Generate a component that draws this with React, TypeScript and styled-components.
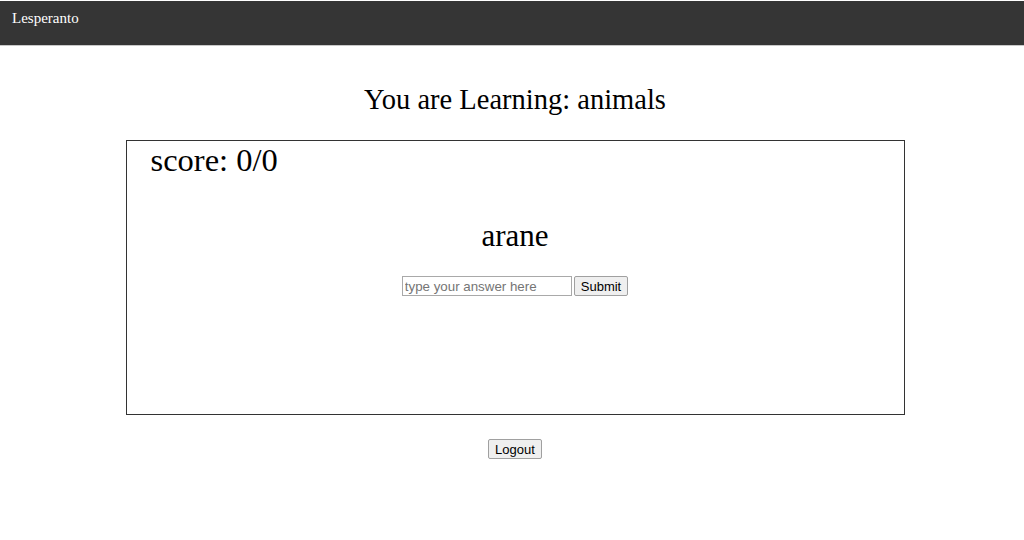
import React, { useState } from 'react';
import styled, { createGlobalStyle } from 'styled-components';

const GlobalStyle = createGlobalStyle`
  html, body {
    margin: 0;
    padding: 0;
    background: #ffffff;
    font-family: "Liberation Serif", "Times New Roman", serif;
  }
`;

const NavBar = styled.nav`
  height: 45px;
  margin-top: 1px;
  background: #353535;
  border-bottom: 1px solid #c8c8c8;
  padding: 9px 12px 0;
  box-sizing: border-box;
  color: #ffffff;
  font-size: 15px;
`;

const Main = styled.main`
  display: flex;
  flex-direction: column;
  align-items: center;
  padding-left: 6px;
`;

const Heading = styled.h2`
  margin: 37px 0 23px;
  font-size: 28.5px;
  line-height: 34px;
  font-weight: normal;
  color: #000;
`;

const Card = styled.div`
  width: 779px;
  height: 275px;
  box-sizing: border-box;
  border: 1px solid #333;
  padding: 0 24px;
  display: flex;
  flex-direction: column;
`;

const Score = styled.div`
  font-size: 32.5px;
  line-height: 38px;
`;

const Word = styled.div`
  margin-top: 38px;
  text-align: center;
  font-size: 31px;
  line-height: 38px;
`;

const AnswerRow = styled.form`
  margin-top: 21px;
  display: flex;
  justify-content: center;
  gap: 2px;
`;

const AnswerInput = styled.input`
  width: 170px;
  height: 20px;
  box-sizing: border-box;
  border: 1px solid #a9a9a9;
  padding: 1px 2px;
  font-family: "Liberation Sans", Arial, sans-serif;
  font-size: 13.33px;
  &::placeholder {
    color: #757575;
  }
`;

const Button = styled.button`
  height: 20px;
  box-sizing: border-box;
  padding: 0 6px;
  border: 1px solid #a0a0a0;
  border-radius: 2px;
  background: #efefef;
  color: #000;
  font-family: "Liberation Sans", Arial, sans-serif;
  font-size: 13px;
`;

const LogoutWrap = styled.div`
  margin-top: 24px;
`;

export default function App() {
  const [answer, setAnswer] = useState('');
  return (
    <>
      <GlobalStyle />
      <NavBar>Lesperanto</NavBar>
      <Main>
        <Heading>You are Learning: animals</Heading>
        <Card>
          <Score>score: 0/0</Score>
          <Word>arane</Word>
          <AnswerRow onSubmit={e => e.preventDefault()}>
            <AnswerInput
              placeholder="type your answer here"
              value={answer}
              onChange={e => setAnswer(e.target.value)}
            />
            <Button type="submit">Submit</Button>
          </AnswerRow>
        </Card>
        <LogoutWrap>
          <Button>Logout</Button>
        </LogoutWrap>
      </Main>
    </>
  );
}
